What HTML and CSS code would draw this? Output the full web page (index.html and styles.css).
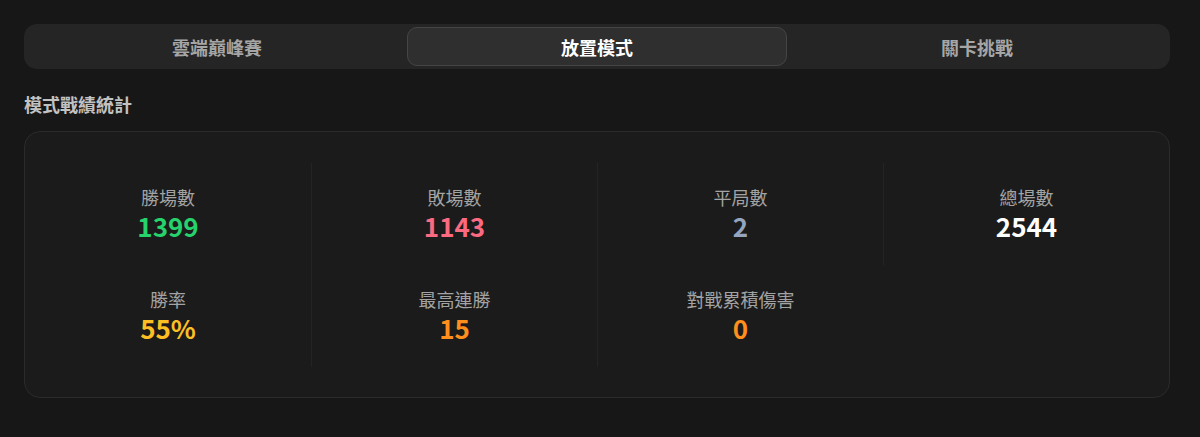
FILE: index.html
```html
<!DOCTYPE html>
<html lang="zh-Hant">
<head>
<meta charset="utf-8">
<title>模式戰績統計</title>
<link rel="stylesheet" href="styles.css">
</head>
<body>
<div class="page">
  <nav class="tabs">
    <button class="tab">雲端巔峰賽</button>
    <button class="tab tab-active">放置模式</button>
    <button class="tab">關卡挑戰</button>
  </nav>
  <h2 class="section-title">模式戰績統計</h2>
  <section class="stats-card">
    <div class="stat">
      <div class="stat-label">勝場數</div>
      <div class="stat-value v-green">1399</div>
    </div>
    <div class="stat">
      <div class="stat-label">敗場數</div>
      <div class="stat-value v-red">1143</div>
    </div>
    <div class="stat">
      <div class="stat-label">平局數</div>
      <div class="stat-value v-slate">2</div>
    </div>
    <div class="stat">
      <div class="stat-label">總場數</div>
      <div class="stat-value v-white">2544</div>
    </div>
    <div class="stat">
      <div class="stat-label">勝率</div>
      <div class="stat-value v-yellow">55%</div>
    </div>
    <div class="stat">
      <div class="stat-label">最高連勝</div>
      <div class="stat-value v-orange">15</div>
    </div>
    <div class="stat">
      <div class="stat-label">對戰累積傷害</div>
      <div class="stat-value v-orange">0</div>
    </div>
  </section>
</div>
</body>
</html>
```

FILE: styles.css
```css
* { box-sizing: border-box; }

html, body {
  margin: 0;
  padding: 0;
  background: #171717;
}

body {
  font-family: "Noto Sans CJK TC", "Noto Sans", sans-serif;
  color: #e5e5e5;
}

.page {
  width: 1146px;
  margin: 24px 0 0 24px;
}

.tabs {
  display: grid;
  grid-template-columns: repeat(3, 1fr);
  padding: 3px;
  background: #252525;
  border-radius: 13px;
}

.tab {
  height: 39px;
  border: 1px solid transparent;
  border-radius: 10px;
  background: transparent;
  font-family: inherit;
  font-size: 18px;
  font-weight: 700;
  color: #a6a6a6;
  display: flex;
  align-items: center;
  justify-content: center;
  padding: 0;
}

.tab-active {
  background: #2f2f2f;
  border-color: #454545;
  color: #ffffff;
}

.section-title {
  margin: 22px 0 13px;
  font-size: 18px;
  line-height: 27px;
  font-weight: 700;
  color: #c2c2c2;
}

.stats-card {
  display: grid;
  grid-template-columns: repeat(4, 1fr);
  padding: 31px 0 30px;
  background: #1b1b1b;
  border: 1px solid #2b2b2b;
  border-radius: 16px;
}

.stat {
  height: 102px;
  padding-bottom: 4px;
  display: flex;
  flex-direction: column;
  align-items: center;
  justify-content: center;
}

.stat:not(:nth-child(4n+1)) {
  border-left: 1px solid #242424;
}

.stat-label {
  font-size: 18px;
  line-height: 27px;
  color: #a3a3a3;
}

.stat-value {
  font-size: 26px;
  line-height: 30px;
  font-weight: 700;
}

.v-green { color: #25d26c; }
.v-red { color: #fb6a80; }
.v-slate { color: #94a5bf; }
.v-white { color: #ffffff; }
.v-yellow { color: #fbbf24; }
.v-orange { color: #ff8e1c; }
```
